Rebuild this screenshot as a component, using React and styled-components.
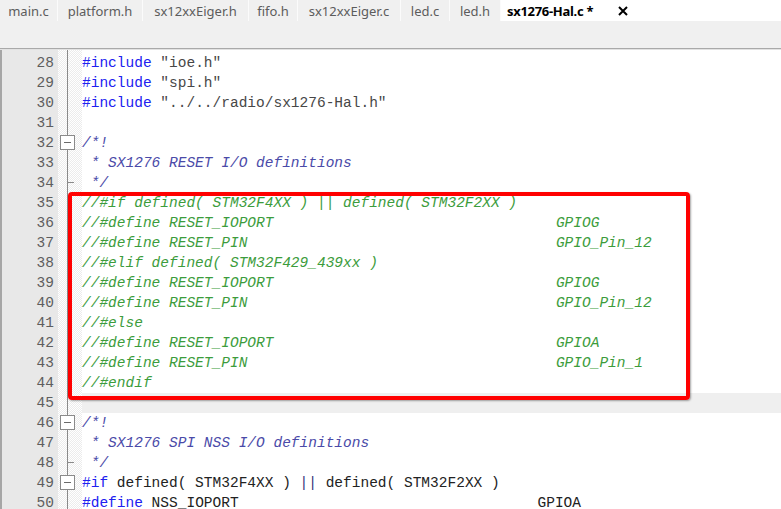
import React from "react";
import styled, { createGlobalStyle } from "styled-components";

const GlobalStyle = createGlobalStyle`
  html, body { margin: 0; padding: 0; background: #fff; overflow: hidden; }
`;

const Window = styled.div`
  width: 781px;
  height: 509px;
  display: flex;
  flex-direction: column;
  overflow: hidden;
  background: #fff;
`;

const TabBar = styled.div`
  flex: none;
  display: flex;
  height: 21px;
  background: #fff;
  font-family: "Noto Sans", "Open Sans", sans-serif;
  font-size: 13px;
`;

const Tab = styled.div`
  box-sizing: border-box;
  width: ${(p) => p.$w}px;
  height: 21px;
  display: flex;
  align-items: center;
  justify-content: ${(p) => (p.$active ? "flex-start" : "center")};
  padding-left: ${(p) => (p.$active ? "6px" : "0")};
  background: ${(p) => (p.$active ? "#fff" : "#f0f0f0")};
  color: ${(p) => (p.$active ? "#000" : "#5c5c5c")};
  font-weight: ${(p) => (p.$active ? 700 : 400)};
  border-right: 1px solid ${(p) => (p.$active ? "#fff" : "#fbfbfb")};
  white-space: nowrap;
  letter-spacing: ${(p) => (p.$active ? "-0.3px" : "0")};
`;

const CloseIcon = styled.svg`
  margin-left: 25px;
  flex: none;
`;

const Strip = styled.div`
  flex: none;
  height: 27px;
  background: #f0f0f0;
  border-bottom: 1px solid #a9a9a9;
  box-shadow: 0 1px 0 #e2e2e2;
  margin-bottom: 1px;
`;

const Editor = styled.div`
  position: relative;
  flex: 1;
  min-height: 0;
  display: flex;
  overflow: hidden;
  border-left: 2px solid #a6a6a6;
  font-family: "Liberation Mono", "Courier New", monospace;
  font-size: 14.5px;
`;

const Gutter = styled.div`
  flex: none;
  width: 56px;
  background: #e8e8e8;
  padding-top: 3px;
  display: flex;
  flex-direction: column;
`;

const LineNo = styled.div`
  flex: none;
  height: 20px;
  line-height: 20px;
  text-align: right;
  padding-right: 4px;
  color: #5e5e5e;
`;

const FoldColumn = styled.div`
  flex: none;
  width: 24px;
  padding-top: 3px;
  display: flex;
  flex-direction: column;
  background:
    linear-gradient(#8a8a8a, #8a8a8a) no-repeat 9px 0 / 1px 100%,
    repeating-conic-gradient(#ececec 0 25%, #ffffff 0 50%) 0 0 / 2px 2px;
`;

const FoldCell = styled.div`
  flex: none;
  height: 20px;
  position: relative;
`;

const FoldBox = styled.span`
  position: absolute;
  left: 2px;
  top: 2px;
  width: 15px;
  height: 15px;
  box-sizing: border-box;
  border: 1px solid #8a8a8a;
  background: #fff;
  &::after {
    content: "";
    position: absolute;
    left: 3px;
    right: 3px;
    top: 6px;
    height: 1px;
    background: #6a6a6a;
  }
`;

const FoldTick = styled.span`
  position: absolute;
  left: 9px;
  top: 9px;
  width: 7px;
  height: 1px;
  background: #8a8a8a;
`;

const Code = styled.div`
  flex: 1;
  padding-top: 3px;
  display: flex;
  flex-direction: column;
`;

const CodeLine = styled.div`
  flex: none;
  height: 20px;
  line-height: 20px;
  white-space: pre;
  color: #222;
  background: ${(p) => (p.$current ? "#efefef" : "transparent")};
`;

const colors = {
  pp: "#2020f0",
  str: "#474747",
  cm: "#4a4aa8",
  lc: "#3c9c3c",
  op: "#33337a",
  tx: "#222",
};

const Tok = styled.span`
  color: ${(p) => colors[p.$k]};
  font-style: ${(p) => (p.$k === "cm" || p.$k === "lc" ? "italic" : "normal")};
  margin-left: ${(p) => (p.$shift ? p.$shift : 0)}px;
`;

const Highlight = styled.div`
  position: absolute;
  left: 66px;
  top: 142px;
  width: 622px;
  height: 208px;
  box-sizing: border-box;
  border: 4px solid #ff0000;
  border-radius: 4px;
  box-shadow: 1px 1px 2px rgba(0, 0, 0, 0.35);
  pointer-events: none;
`;

const pad = (s, n) => s + " ".repeat(Math.max(0, n - s.length));

const def = (name, value) => [
  ["lc", pad("//#define " + name, 54)],
  ["lc", value, 4],
];

const lines = [
  { n: 28, t: [["pp", "#include"], ["tx", " "], ["str", '"ioe.h"']] },
  { n: 29, t: [["pp", "#include"], ["tx", " "], ["str", '"spi.h"']] },
  { n: 30, t: [["pp", "#include"], ["tx", " "], ["str", '"../../radio/sx1276-Hal.h"']] },
  { n: 31, t: [] },
  { n: 32, fold: "box", t: [["cm", "/*!"]] },
  { n: 33, t: [["cm", " * SX1276 RESET I/O definitions"]] },
  { n: 34, fold: "end", t: [["cm", " */"]] },
  { n: 35, t: [["lc", "//#if defined( STM32F4XX ) || defined( STM32F2XX )"]] },
  { n: 36, t: def("RESET_IOPORT", "GPIOG") },
  { n: 37, t: def("RESET_PIN", "GPIO_Pin_12") },
  { n: 38, t: [["lc", "//#elif defined( STM32F429_439xx )"]] },
  { n: 39, t: def("RESET_IOPORT", "GPIOG") },
  { n: 40, t: def("RESET_PIN", "GPIO_Pin_12") },
  { n: 41, t: [["lc", "//#else"]] },
  { n: 42, t: def("RESET_IOPORT", "GPIOA") },
  { n: 43, t: def("RESET_PIN", "GPIO_Pin_1") },
  { n: 44, t: [["lc", "//#endif"]] },
  { n: 45, current: true, t: [] },
  { n: 46, fold: "box", t: [["cm", "/*!"]] },
  { n: 47, t: [["cm", " * SX1276 SPI NSS I/O definitions"]] },
  { n: 48, fold: "end", t: [["cm", " */"]] },
  {
    n: 49,
    fold: "box",
    t: [
      ["pp", "#if"],
      ["tx", " defined( STM32F4XX ) "],
      ["op", "||"],
      ["tx", " defined( STM32F2XX )"],
    ],
  },
  {
    n: 50,
    t: [
      ["pp", "#define"],
      ["tx", pad(" NSS_IOPORT", 45)],
      ["tx", "GPIOA", 3],
    ],
  },
];

const tabs = [
  { label: "main.c", w: 58 },
  { label: "platform.h", w: 85 },
  { label: "sx12xxEiger.h", w: 106 },
  { label: "fifo.h", w: 49 },
  { label: "sx12xxEiger.c", w: 103 },
  { label: "led.c", w: 49 },
  { label: "led.h", w: 51 },
  { label: "sx1276-Hal.c *", w: 133, active: true },
];

export default function App() {
  return (
    <>
      <GlobalStyle />
      <Window>
        <TabBar>
          {tabs.map((t) => (
            <Tab key={t.label} $w={t.w} $active={t.active}>
              {t.label}
              {t.active && (
                <CloseIcon width="10" height="10" viewBox="0 0 10 10">
                  <path d="M1 1 L9 9 M9 1 L1 9" stroke="#000" strokeWidth="2" />
                </CloseIcon>
              )}
            </Tab>
          ))}
        </TabBar>
        <Strip />
        <Editor>
          <Gutter>
            {lines.map((l) => (
              <LineNo key={l.n}>{l.n}</LineNo>
            ))}
          </Gutter>
          <FoldColumn>
            {lines.map((l) => (
              <FoldCell key={l.n}>
                {l.fold === "box" && <FoldBox />}
                {l.fold === "end" && <FoldTick />}
              </FoldCell>
            ))}
          </FoldColumn>
          <Code>
            {lines.map((l) => (
              <CodeLine key={l.n} $current={l.current}>
                {l.t.length === 0
                  ? " "
                  : l.t.map(([k, s, shift], i) => (
                      <Tok key={i} $k={k} $shift={shift}>
                        {s}
                      </Tok>
                    ))}
              </CodeLine>
            ))}
          </Code>
          <Highlight />
        </Editor>
      </Window>
    </>
  );
}
